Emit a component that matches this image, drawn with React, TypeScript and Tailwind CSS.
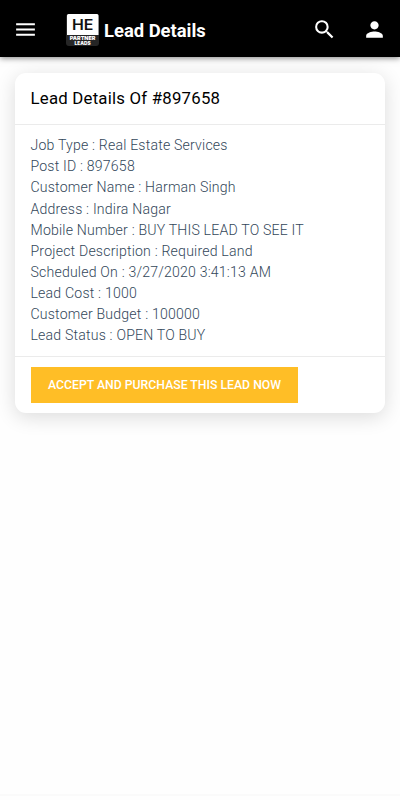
import React from "react";
import { MdMenu, MdPerson, MdSearch } from "react-icons/md";

interface LeadField {
  label: string;
  value: string;
}

const fields: LeadField[] = [
  { label: "Job Type", value: "Real Estate Services" },
  { label: "Post ID", value: "897658" },
  { label: "Customer Name", value: "Harman Singh" },
  { label: "Address", value: "Indira Nagar" },
  { label: "Mobile Number", value: "BUY THIS LEAD TO SEE IT" },
  { label: "Project Description", value: "Required Land" },
  { label: "Scheduled On", value: "3/27/2020 3:41:13 AM" },
  { label: "Lead Cost", value: "1000" },
  { label: "Customer Budget", value: "100000" },
  { label: "Lead Status", value: "OPEN TO BUY" },
];

const Logo: React.FC = () => (
  <svg width="33" height="32" viewBox="0 0 33 32" className="shrink-0" fontFamily="Inter, 'Liberation Sans', sans-serif" textAnchor="middle">
    <rect width="33" height="32" rx="3" fill="#262626" />
    <path d="M2.5 0H31a1.5 1.5 0 0 1 1.5 1.5V21H1V1.5A1.5 1.5 0 0 1 2.5 0Z" fill="#fff" />
    <text x="16.7" y="16" fontSize="14.5" fontWeight="600" fill="#111" textLength="21.5" lengthAdjust="spacingAndGlyphs">HE</text>
    <text x="16.6" y="26.2" fontSize="5.4" fontWeight="900" fill="#fff" textLength="25.5" lengthAdjust="spacingAndGlyphs">PARTNER</text>
    <text x="16.6" y="30.8" fontSize="4.9" fontWeight="900" fill="#fff" textLength="16" lengthAdjust="spacingAndGlyphs">LEADS</text>
  </svg>
);

const LeadDetails: React.FC = () => {
  return (
    <div className="flex h-[800px] w-full flex-col overflow-hidden bg-[#fefefe] font-['Roboto','Liberation_Sans',sans-serif]">
      {/* Top bar */}
      <header className="z-10 flex h-[57px] shrink-0 items-center bg-black pb-px pl-[13px] pr-[13px] pt-[3px] text-white shadow-[0_1px_6px_rgba(0,0,0,0.5)]">
        <button aria-label="Menu">
          <MdMenu size={25} />
        </button>
        <div className="ml-7 flex items-center">
          <Logo />
          <h1 className="ml-[5px] pt-0.5 text-[18.4px] font-bold leading-6">Lead Details</h1>
        </div>
        <div className="ml-auto flex items-center gap-[25.5px]">
          <button aria-label="Search">
            <MdSearch size={25} />
          </button>
          <button aria-label="Account">
            <MdPerson size={25} />
          </button>
        </div>
      </header>

      {/* Lead card */}
      <main className="flex-1 px-[15px] pt-4">
        <section className="rounded-[11px] bg-white shadow-[0_4px_20px_rgba(0,0,0,0.14)]">
          <div className="flex h-[52px] items-center border-b border-[#ebebeb] px-[15.5px]">
            <h2 className="text-[16.8px] font-normal tracking-[0.22px] text-black">Lead Details Of #897658</h2>
          </div>
          <div className="h-[232px] border-b border-[#ebebeb] px-[15.5px] pt-[10.2px] text-[14.1px] font-light leading-[21.12px] tracking-[0.19px] text-[#33475a]">
            {fields.map((field) => (
              <p key={field.label}>
                {field.label} : {field.value}
              </p>
            ))}
          </div>
          <div className="px-4 py-[10px]">
            <button className="h-9 w-[267px] bg-[#ffbe26] text-[12.25px] font-medium text-white">
              ACCEPT AND PURCHASE THIS LEAD NOW
            </button>
          </div>
        </section>
      </main>

      <footer className="h-1.5 shrink-0 border-t-2 border-[#fafafa]" />
    </div>
  );
};

export default LeadDetails;
